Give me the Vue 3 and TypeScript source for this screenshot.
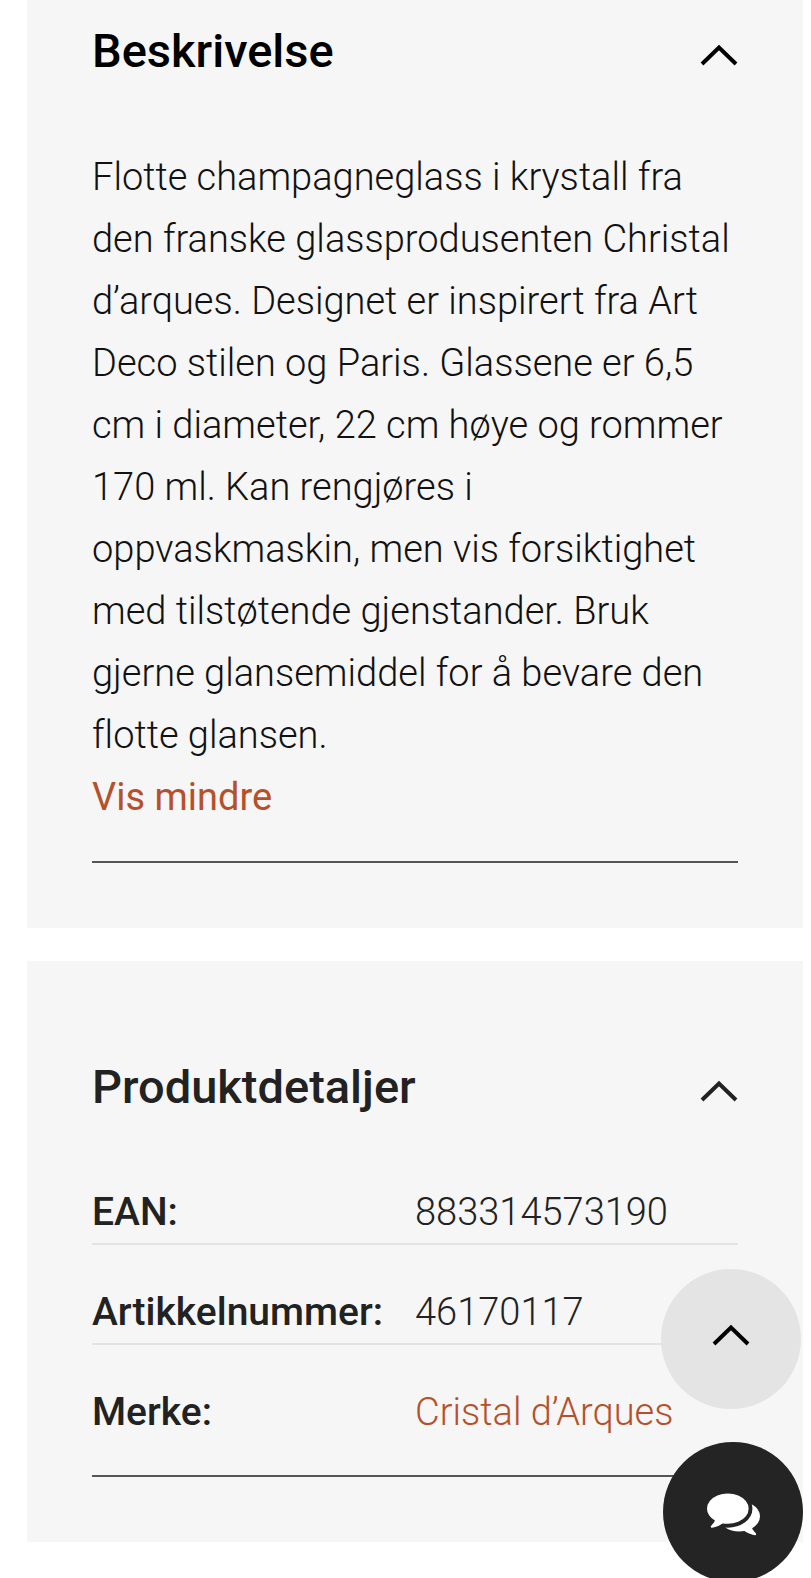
<script setup lang="ts">
import { ref } from 'vue'

const descriptionOpen = ref(true)
const detailsOpen = ref(true)
const expanded = ref(true)
const lines: string[] = [
  'Flotte champagneglass i krystall fra',
  'den franske glassprodusenten Christal',
  'd’arques. Designet er inspirert fra Art',
  'Deco stilen og Paris. Glassene er 6,5',
  'cm i diameter, 22 cm høye og rommer',
  '170 ml. Kan rengjøres i',
  'oppvaskmaskin, men vis forsiktighet',
  'med tilstøtende gjenstander. Bruk',
  'gjerne glansemiddel for å bevare den',
  'flotte glansen.',
]
const toTop = () => window.scrollTo({ top: 0, behavior: 'smooth' })
</script>

<template>
  <main class="page">
    <section class="card first">
      <h2>
        <button class="head black" :aria-expanded="descriptionOpen" @click="descriptionOpen = !descriptionOpen">
          <span>Beskrivelse</span>
          <svg class="chev" viewBox="0 0 38 24" aria-hidden="true"><path d="M2 21 19 4.500l17 16.500" /></svg>
        </button>
      </h2>
      <div v-if="descriptionOpen" class="desc">
        <p><template v-for="(line, i) in expanded ? lines : lines.slice(0, 3)" :key="i">{{ line }}<br /></template></p>
        <button class="more" @click="expanded = !expanded">{{ expanded ? 'Vis mindre' : 'Vis mer' }}</button>
      </div>
    </section>
    <section class="card second">
      <h2>
        <button class="head" :aria-expanded="detailsOpen" @click="detailsOpen = !detailsOpen">
          <span>Produktdetaljer</span>
          <svg class="chev" viewBox="0 0 38 24" aria-hidden="true"><path d="M2 21 19 4.500l17 16.500" /></svg>
        </button>
      </h2>
      <table v-if="detailsOpen">
        <tbody>
          <tr><th scope="row">EAN:</th><td>883314573190</td></tr>
          <tr><th scope="row">Artikkelnummer:</th><td>46170117</td></tr>
          <tr><th scope="row">Merke:</th><td><a href="#">Cristal d’Arques</a></td></tr>
        </tbody>
      </table>
    </section>
    <button class="round top" aria-label="Til toppen" @click="toTop">
      <svg class="chev" viewBox="0 0 38 24" aria-hidden="true"><path d="M2 21 19 4.500l17 16.500" /></svg>
    </button>
    <button class="round chat" aria-label="Chat">
      <svg class="bubbles" viewBox="0 0 1792 1792" aria-hidden="true"><path d="M1408 768q0 139-94 257t-256.500 186.500-353.500 68.500q-86 0-176-16-124 88-278 128-36 9-86 16h-3q-11 0-20.500-8t-11.500-21q-1-3-1-6.500t.5-6.500 2-6l2.500-5 3.500-5.500 4-5 4.500-5 4-4.500q5-6 23-25t26-29.500 22.500-29 25-38.500 20.500-44q-124-72-195-177t-71-224q0-139 94-257t256.500-186.500 353.500-68.500 353.500 68.500 256.500 186.500 94 257zm384 256q0 120-71 224.500t-195 176.500q10 24 20.500 44t25 38.500 22.500 29 26 29.500 23 25q1 1 4 4.500t4.500 5 4 5 3.500 5.500l2.500 5 2 6 .5 6.500-1 6.500q-3 14-13 22t-22 7q-50-7-86-16-154-40-278-128-90 16-176 16-271 0-472-132 58 4 88 4 161 0 309-45t264-129q125-92 192-212t67-254q0-77-23-152 129 71 204 178t75 230z" /></svg>
    </button>
  </main>
</template>

<style>
body { margin: 0; background: #fff; }
</style>

<style scoped>
.page { padding: 0 8px 0 27px; font-family: Roboto, "Liberation Sans", sans-serif; font-variant-ligatures: none; color: #222; }
.card { background: #f6f6f6; padding: 0 65px 65px; }
.first { padding-top: 20px; margin-bottom: 33px; }
.second { padding-top: 95px; }
h2 { margin: 0; font-size: 47px; line-height: 62px; font-weight: 500; }
.head { width: 100%; display: flex; justify-content: space-between; align-items: center; border: 0; background: none; padding: 0; font: inherit; color: #222; text-align: left; cursor: pointer; }
.black { color: #000; }
.chev { width: 38px; height: 24px; fill: none; stroke: currentColor; stroke-width: 4; flex: none; }
.head .chev { margin-top: 8px; }
.desc { padding: 64px 0 33px; border-bottom: 2px solid #555; font-size: 38px; line-height: 62px; font-weight: 300; color: #111; }
p { margin: 0; }
.more { display: block; border: 0; background: none; padding: 0; font: inherit; font-weight: 400; color: #b5512a; cursor: pointer; }
table { width: 100%; border-collapse: separate; border-spacing: 0; table-layout: fixed; margin-top: 27px; border-bottom: 2px solid #555; font-size: 38px; line-height: 62px; }
th, td { padding: 36px 0 0; text-align: left; vertical-align: top; font-weight: 300; border-bottom: 2px solid #e3e3e3; white-space: nowrap; }
th { font-size: 39px; font-weight: 500; }
tr:last-child > * { border-bottom: 0; padding-bottom: 32px; }
a { color: #b5512a; text-decoration: none; }
.round { position: fixed; width: 140px; height: 140px; border: 0; border-radius: 50%; padding: 0; display: flex; align-items: center; justify-content: center; cursor: pointer; }
.top { right: 10px; bottom: 169px; background: #e4e4e4; color: #000; }
.top .chev { margin-bottom: 8px; }
.chat { right: 8px; bottom: -4px; background: #242424; color: #fff; }
.bubbles { width: 53px; height: 53px; fill: currentColor; }
</style>
